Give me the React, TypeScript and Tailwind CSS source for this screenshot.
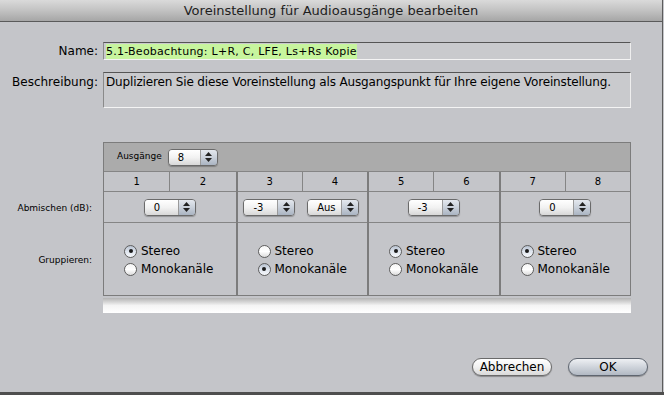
const FONT = { fontFamily: '"DejaVu Sans", "Noto Sans", sans-serif' }

function Stepper({ value, width = "w-[52px]" }: { value: string; width?: string }) {
  return (
    <div
      className={`${width} h-[17px] flex rounded-[4px] border border-[#6a6a6a] overflow-hidden shadow-[0_1px_1px_rgba(0,0,0,0.25)]`}
    >
      <div className="flex-1 flex items-center pl-[9px] text-[10px] text-black bg-gradient-to-b from-[#ffffff] via-[#f2f2f2] to-[#d8d8d8]">
        {value}
      </div>
      <div className="w-[17px] flex flex-col items-center justify-center gap-[2px] border-l border-[#9a9a9a] bg-gradient-to-b from-[#e4e8ee] via-[#c9d0da] to-[#aab4c2]">
        <svg width="7" height="4" viewBox="0 0 7 4">
          <path d="M3.5 0 L7 4 L0 4 Z" fill="#222" />
        </svg>
        <svg width="7" height="4" viewBox="0 0 7 4">
          <path d="M0 0 L7 0 L3.5 4 Z" fill="#222" />
        </svg>
      </div>
    </div>
  )
}

function Radio({ label, checked }: { label: string; checked?: boolean }) {
  return (
    <div className="flex items-center gap-[4px] h-[18px]">
      <div
        className={`w-[13px] h-[13px] rounded-full border border-[#5e5e5e] flex items-center justify-center ${
          checked
            ? "bg-gradient-to-b from-[#b8c2d0] via-[#dfe5ee] to-[#f5f7fa]"
            : "bg-gradient-to-b from-[#f6f6f6] via-[#ffffff] to-[#dcdcdc]"
        }`}
      >
        {checked && <div className="w-[4px] h-[4px] rounded-full bg-[#1a1a1a]" />}
      </div>
      <span className="text-[12px] text-black">{label}</span>
    </div>
  )
}

interface GroupProps {
  nums: [string, string]
  mixer: React.ReactNode
  stereo: boolean
  first?: boolean
}

function Group({ nums, mixer, stereo, first }: GroupProps) {
  return (
    <div className={`w-[132px] flex flex-col ${first ? "" : "border-l-2 border-[#7c7c7c]"}`}>
      <div className="h-[20px] flex border-b border-[#858585] text-[10px] text-black">
        <div className="flex-1 flex items-center justify-center border-r border-[#858585]">{nums[0]}</div>
        <div className="flex-1 flex items-center justify-center">{nums[1]}</div>
      </div>
      <div className="h-[31px] flex items-center border-b border-[#858585]">{mixer}</div>
      <div className="flex-1 flex flex-col pt-[19px] pl-[20px]">
        <Radio label="Stereo" checked={stereo} />
        <Radio label="Monokanäle" checked={!stereo} />
      </div>
    </div>
  )
}

export default function App() {
  return (
    <div className="w-[664px] h-[395px] bg-[#c4c5c9] overflow-hidden" style={FONT}>
      <div className="w-[663px] h-[392px] flex flex-col border-r border-[#5c5c5c]">
        <div className="h-[22px] shrink-0 flex items-center justify-center border-b border-[#5a5a5a] bg-gradient-to-b from-[#dadada] via-[#c2c2c2] to-[#a6a6a6] text-[13px] text-[#1e1e1e]">
          Voreinstellung für Audioausgänge bearbeiten
        </div>

        <div className="grid grid-cols-[98px_528px] gap-x-[5px] gap-y-[12px] mt-[20px] text-[12px] text-black">
          <div className="text-right leading-[18px]">Name:</div>
          <div className="h-[18px] flex items-center pl-[2px] bg-[#c9cacd] border-t border-l border-t-[#555] border-l-[#8a8a8a] border-r border-b border-r-[#eeeeee] border-b-[#f4f4f4]">
            <span className="bg-[#c7f59e] leading-[15px] text-[11px] tracking-[0.25px]">
              5.1-Beobachtung: L+R, C, LFE, Ls+Rs Kopie
            </span>
          </div>

          <div className="text-right leading-[18px] pt-[1px]">Beschreibung:</div>
          <div className="h-[36px] pl-[2px] pt-[1px] leading-[16px] tracking-[-0.15px] bg-[#c9cacd] border-t border-l border-t-[#555] border-l-[#8a8a8a] border-r border-b border-r-[#eeeeee] border-b-[#f4f4f4]">
            Duplizieren Sie diese Voreinstellung als Ausgangspunkt für Ihre eigene Voreinstellung.
          </div>
        </div>

        <div className="grid grid-cols-[98px_528px] gap-x-[5px] mt-[34px]">
          <div className="flex flex-col text-[9px] text-black text-right pr-[6px]">
            <div className="h-[51px]" />
            <div className="h-[31px] leading-[31px]">Abmischen (dB):</div>
            <div className="h-[72px] leading-[72px]">Gruppieren:</div>
          </div>
          <div className="flex flex-col">
            <div className="border border-[#7c7c7c]">
              <div className="h-[29px] flex items-center gap-[6px] pl-[13px] bg-[#ababab] border-b border-[#858585] text-[9px] text-black">
                <span>Ausgänge</span>
                <Stepper value="8" width="w-[50px]" />
              </div>
              <div className="h-[123px] flex">
                <Group
                  first
                  nums={["1", "2"]}
                  stereo
                  mixer={<div className="flex-1 flex justify-center"><Stepper value="0" /></div>}
                />
                <Group
                  nums={["3", "4"]}
                  stereo={false}
                  mixer={
                    <div className="flex-1 flex justify-around pr-[2px]">
                      <Stepper value="-3" />
                      <Stepper value="Aus" />
                    </div>
                  }
                />
                <Group
                  nums={["5", "6"]}
                  stereo
                  mixer={<div className="flex-1 flex justify-center"><Stepper value="-3" /></div>}
                />
                <Group
                  nums={["7", "8"]}
                  stereo
                  mixer={<div className="flex-1 flex justify-center"><Stepper value="0" /></div>}
                />
              </div>
            </div>
            <div className="h-[15px] mt-[2px] bg-gradient-to-b from-[#b4b4b4] via-[#f4f4f4] to-[#ffffff]" />
          </div>
        </div>

        <div className="flex-1" />
        <div className="flex justify-end gap-[16px] pr-[14px] pb-[16px] text-[12px] text-black">
          <button className="w-[80px] h-[18px] rounded-full border border-[#6a6a6a] bg-gradient-to-b from-[#ffffff] via-[#f1f1f1] to-[#d9d9d9] shadow-[0_1px_1px_rgba(0,0,0,0.3)] leading-[16px]">
            Abbrechen
          </button>
          <button className="w-[80px] h-[18px] rounded-full border border-[#5f6670] bg-gradient-to-b from-[#eef0f3] via-[#cfd4db] to-[#b2b9c3] shadow-[0_1px_1px_rgba(0,0,0,0.3)] leading-[16px]">
            OK
          </button>
        </div>
      </div>
      <div className="w-[664px] h-[3px] bg-[#4e4e4e]" />
    </div>
  )
}
